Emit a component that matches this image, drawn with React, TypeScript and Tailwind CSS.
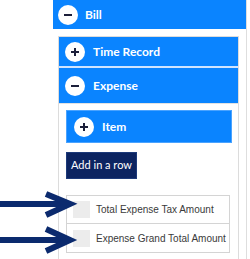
import React from "react";

const blue = "bg-[#0a84ff]";

function Toggle({ open }: { open: boolean }) {
  return (
    <span className="w-[20px] h-[20px] rounded-full bg-white flex items-center justify-center shrink-0">
      <svg width="10" height="10" viewBox="0 0 10 10">
        <rect x="1" y="4" width="8" height="2" fill="#1c1f3a" />
        {!open && <rect x="4" y="1" width="2" height="8" fill="#1c1f3a" />}
      </svg>
    </span>
  );
}

function Header({ label, open, className }: { label: string; open: boolean; className: string }) {
  return (
    <div className={`${blue} flex items-center text-white font-bold text-[12px] ${className}`}>
      <Toggle open={open} />
      <span>{label}</span>
    </div>
  );
}

function Row({ label, last }: { label: string; last?: boolean }) {
  return (
    <div className={`h-[28px] flex items-center gap-[6px] pl-[6px] ${last ? "" : "border-b border-[#d4d4d4]"}`}>
      <span className="w-[17px] h-[17px] bg-[#ececec] shrink-0" />
      <span className="text-[10px] text-[#3a3a3a] whitespace-nowrap">{label}</span>
    </div>
  );
}

export default function App() {
  return (
    <div className="relative w-[250px] h-[259px] overflow-hidden bg-white" style={{ fontFamily: "Lato, 'Open Sans', sans-serif" }}>
      <div className="ml-[53px] w-[194px] h-full border-r border-[#dedede]">
        <Header label="Bill" open className="h-[29px] pl-[5px] gap-[7px]" />
        <div className="mt-[7px] ml-[5px] w-[181px] h-[230px] border border-[#dcdcdc] border-b-0">
          <Header label="Time Record" open={false} className="h-[31px] pl-[6px] gap-[8px] border-b-2 border-[#cfe4ff]" />
          <Header label="Expense" open className="h-[35px] pl-[6px] gap-[8px]" />
          <div className="pl-[7px] pr-[6px] pt-[6px] border-t border-[#e2e2e2] h-full">
            <Header label="Item" open={false} className="h-[33px] pl-[7px] gap-[8px] border border-[#4aa3ff]" />
            <button className="mt-[9px] h-[27px] w-[71px] bg-[#0c2461] text-white text-[11px] border border-[#1d3a7a]">
              Add in a row
            </button>
            <div className="mt-[16px] w-[164px] border border-[#d4d4d4]" style={{ fontFamily: "'Liberation Sans', sans-serif" }}>
              <Row label="Total Expense Tax Amount" />
              <Row label="Expense Grand Total Amount" last />
            </div>
          </div>
        </div>
      </div>
      <svg className="absolute left-0 top-0 pointer-events-none" width="250" height="259" viewBox="0 0 250 259">
        <g stroke="#0b2a6e" strokeWidth="6" fill="none" strokeLinejoin="miter">
          <line x1="0" y1="204" x2="66" y2="204" />
          <polyline points="46,194 70,204 46,215" />
          <line x1="0" y1="240" x2="66" y2="240" />
          <polyline points="46,229 70,240 46,251" />
        </g>
      </svg>
    </div>
  );
}
